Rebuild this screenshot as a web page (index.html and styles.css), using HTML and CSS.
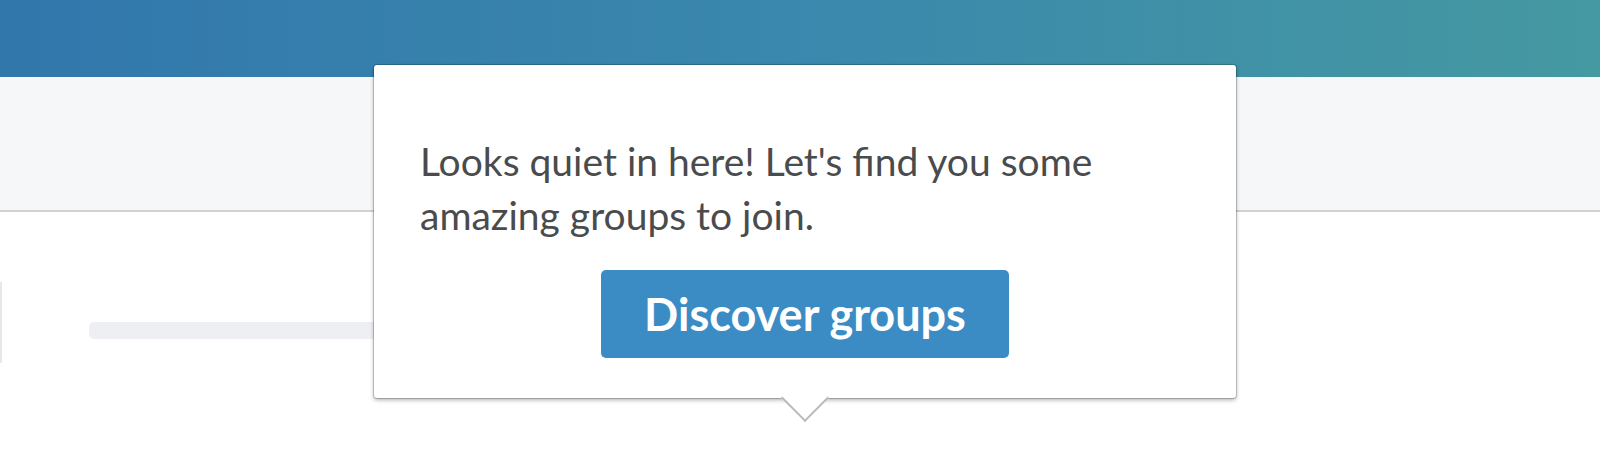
FILE: index.html
```html
<!DOCTYPE html>
<html lang="en">
<head>
    <meta charset="UTF-8">
    <meta name="viewport" content="width=device-width, initial-scale=1.0">
    <title>Groups</title>
    <link rel="stylesheet" href="styles.css">
</head>
<body>

    <!-- Barra superior -->
    <header class="topbar"></header>

    <!-- Sub navegación -->
    <div class="subnav"></div>

    <!-- Contenido (placeholder mientras carga) -->
    <div class="content">
        <div class="card-edge"></div>
        <div class="skeleton-line"></div>
    </div>

    <!-- Popover vacío -->
    <div class="popover">
        <p class="popover-text">Looks quiet in here! Let's find you some amazing groups to join.</p>
        <button class="btn">Discover groups</button>
    </div>

</body>
</html>
```

FILE: styles.css
```css
body {
    font-family: Lato, "Open Sans", sans-serif;
    background-color: #fff;
    margin: 0;
    padding: 0;
    overflow: hidden;
}

.topbar {
    height: 77px;
    background: linear-gradient(90deg, #3277ac 0%, #3a88ad 50%, #4599a1 100%);
}

.subnav {
    height: 133px;
    background-color: #f6f7f9;
    border-bottom: 2px solid #d0d1d5;
}

.content {
    display: flex;
    align-items: flex-start;
    padding-top: 70px;
}

.card-edge {
    width: 0;
    height: 81px;
    border-left: 2px solid #e6e7ea;
}

.skeleton-line {
    width: 320px;
    height: 17px;
    margin-left: 87px;
    margin-top: 40px;
    border-radius: 5px;
    background-color: #eeeff2;
}

.popover {
    position: absolute;
    left: 374px;
    top: 65px;
    width: 862px;
    height: 333px;
    box-sizing: border-box;
    padding: 69px 46px 0;
    background-color: #fff;
    border-radius: 3px;
    box-shadow: 0 0 0 1px rgba(0, 0, 0, 0.18), 0 2px 4px rgba(0, 0, 0, 0.32);
}

.popover::after {
    content: "";
    position: absolute;
    left: 50%;
    bottom: -17px;
    width: 32px;
    height: 32px;
    margin-left: -17px;
    background-color: #fff;
    border-right: 2px solid #b9b9b9;
    border-bottom: 2px solid #b9b9b9;
    transform: rotate(45deg);
}

.popover-text {
    margin: 0;
    font-size: 39px;
    line-height: 54px;
    color: #4a4b4d;
}

.btn {
    display: block;
    width: 408px;
    height: 88px;
    margin: 28px auto 0;
    padding: 0;
    border: none;
    border-radius: 5px;
    background-color: #3b8cc4;
    color: #fff;
    font-family: Lato, "Open Sans", sans-serif;
    font-size: 45px;
    font-weight: bold;
    line-height: 86px;
    cursor: pointer;
}
```
